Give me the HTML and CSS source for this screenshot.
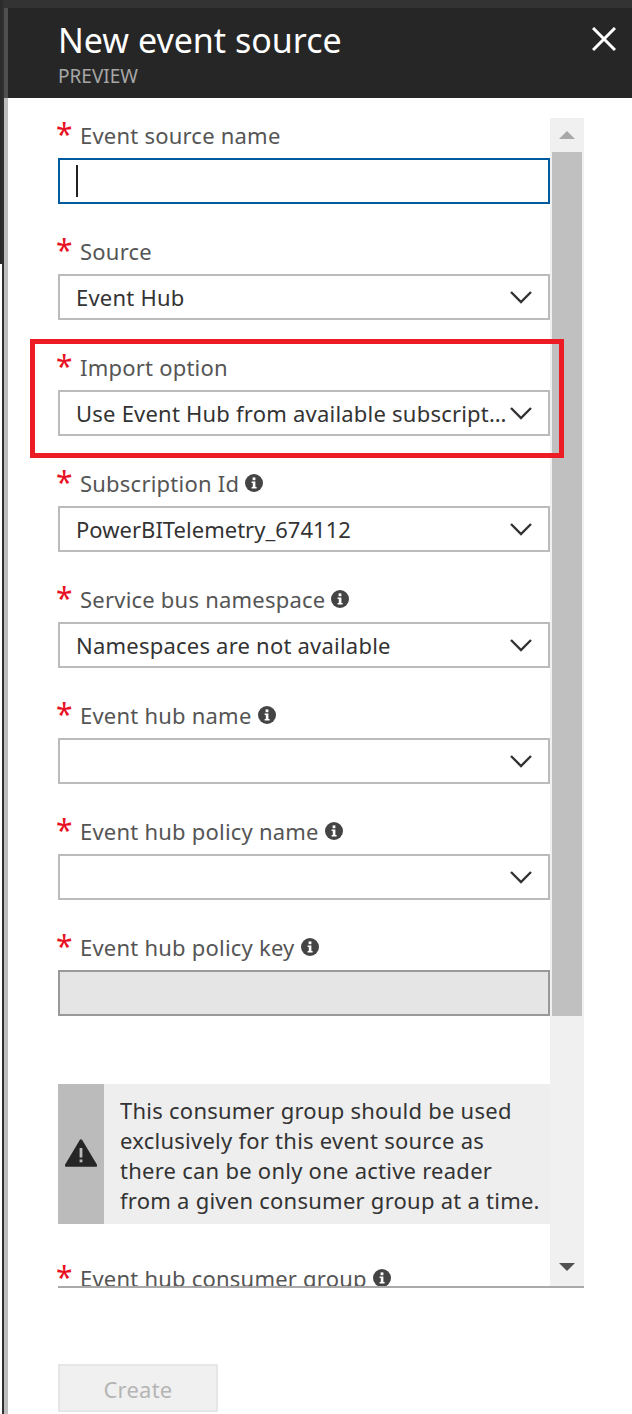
FILE: index.html
```html
<!doctype html>
<html>

<head>
    <meta charset="UTF-8">
    <title>New event source</title>
    <link rel="stylesheet" href="styles.css">
</head>

<body>
    <div class="page">
        <div class="edge-outer"><i></i><i></i></div>
        <div class="edge-blade"></div>

        <div class="blade">
            <div class="top-band"></div>

            <div class="header">
                <div>
                    <h1>New event source</h1>
                    <div class="subtitle">PREVIEW</div>
                </div>
                <svg class="close" width="24" height="24" viewBox="0 0 24 24">
                    <path d="M1 1L23 23M23 1L1 23" stroke="#fff" stroke-width="3" fill="none" />
                </svg>
            </div>

            <div class="body">
                <div class="form-wrap">
                    <div class="form">
                        <div class="fields">
                            <div class="field">
                                <div class="label"><span class="star">*</span>Event source name</div>
                                <div class="input focused"><span class="caret"></span></div>
                            </div>
                            <div class="field">
                                <div class="label"><span class="star">*</span>Source</div>
                                <div class="input">
                                    <span class="value">Event Hub</span>
                                    <svg class="chevron" width="24" height="14" viewBox="0 0 24 14"><path d="M2 2L12 12L22 2" /></svg>
                                </div>
                            </div>
                            <div class="field">
                                <div class="label"><span class="star">*</span>Import option</div>
                                <div class="input">
                                    <span class="value">Use Event Hub from available subscriptions</span>
                                    <svg class="chevron" width="24" height="14" viewBox="0 0 24 14"><path d="M2 2L12 12L22 2" /></svg>
                                </div>
                            </div>
                            <div class="field">
                                <div class="label"><span class="star">*</span>Subscription Id
                                    <svg class="info" width="18" height="18" viewBox="0 0 18 18"><circle cx="9" cy="9" r="9" /><rect x="7.6" y="3.4" width="2.8" height="2.8" /><path d="M6.6 7.4H10.4V13H11.6V14.6H6.6V13H7.8V9H6.6Z" /></svg>
                                </div>
                                <div class="input">
                                    <span class="value narrow">PowerBITelemetry_674112</span>
                                    <svg class="chevron" width="24" height="14" viewBox="0 0 24 14"><path d="M2 2L12 12L22 2" /></svg>
                                </div>
                            </div>
                            <div class="field">
                                <div class="label"><span class="star">*</span>Service bus namespace
                                    <svg class="info" width="18" height="18" viewBox="0 0 18 18"><circle cx="9" cy="9" r="9" /><rect x="7.6" y="3.4" width="2.8" height="2.8" /><path d="M6.6 7.4H10.4V13H11.6V14.6H6.6V13H7.8V9H6.6Z" /></svg>
                                </div>
                                <div class="input">
                                    <span class="value">Namespaces are not available</span>
                                    <svg class="chevron" width="24" height="14" viewBox="0 0 24 14"><path d="M2 2L12 12L22 2" /></svg>
                                </div>
                            </div>
                            <div class="field">
                                <div class="label"><span class="star">*</span>Event hub name
                                    <svg class="info" width="18" height="18" viewBox="0 0 18 18"><circle cx="9" cy="9" r="9" /><rect x="7.6" y="3.4" width="2.8" height="2.8" /><path d="M6.6 7.4H10.4V13H11.6V14.6H6.6V13H7.8V9H6.6Z" /></svg>
                                </div>
                                <div class="input">
                                    <span class="value"></span>
                                    <svg class="chevron" width="24" height="14" viewBox="0 0 24 14"><path d="M2 2L12 12L22 2" /></svg>
                                </div>
                            </div>
                            <div class="field">
                                <div class="label"><span class="star">*</span>Event hub policy name
                                    <svg class="info" width="18" height="18" viewBox="0 0 18 18"><circle cx="9" cy="9" r="9" /><rect x="7.6" y="3.4" width="2.8" height="2.8" /><path d="M6.6 7.4H10.4V13H11.6V14.6H6.6V13H7.8V9H6.6Z" /></svg>
                                </div>
                                <div class="input">
                                    <span class="value"></span>
                                    <svg class="chevron" width="24" height="14" viewBox="0 0 24 14"><path d="M2 2L12 12L22 2" /></svg>
                                </div>
                            </div>
                            <div class="field">
                                <div class="label"><span class="star">*</span>Event hub policy key
                                    <svg class="info" width="18" height="18" viewBox="0 0 18 18"><circle cx="9" cy="9" r="9" /><rect x="7.6" y="3.4" width="2.8" height="2.8" /><path d="M6.6 7.4H10.4V13H11.6V14.6H6.6V13H7.8V9H6.6Z" /></svg>
                                </div>
                                <div class="input disabled"></div>
                            </div>

                            <div class="warning">
                                <div class="warning-icon">
                                    <svg width="32" height="28" viewBox="0 0 32 28">
                                        <path d="M16 1.5L31 26.5H1Z" fill="#262626" stroke="#262626" stroke-width="2.5" stroke-linejoin="round" />
                                        <rect x="14.6" y="9" width="2.8" height="9.5" fill="#bbb" />
                                        <rect x="14.6" y="20.5" width="2.8" height="2.8" fill="#bbb" />
                                    </svg>
                                </div>
                                <div class="warning-text">This consumer group should be used<br>exclusively for this event source as<br>there can be only one active reader<br>from a given consumer group at a time.</div>
                            </div>

                            <div class="label"><span class="star">*</span>Event hub consumer group
                                <svg class="info" width="18" height="18" viewBox="0 0 18 18"><circle cx="9" cy="9" r="9" /><rect x="7.6" y="3.4" width="2.8" height="2.8" /><path d="M6.6 7.4H10.4V13H11.6V14.6H6.6V13H7.8V9H6.6Z" /></svg>
                            </div>
                        </div>

                        <div class="scrollbar">
                            <div class="arrow up"></div>
                            <div class="thumb"></div>
                            <div class="arrow down"></div>
                        </div>
                    </div>

                    <div class="highlight"></div>
                </div>

                <div class="create">Create</div>
            </div>
        </div>
    </div>
</body>

</html>
```

FILE: styles.css
```css
* {
    margin: 0;
    padding: 0;
    box-sizing: border-box;
}

body {
    background: #fff;
    font-family: "Noto Sans", "Open Sans", sans-serif;
    overflow: hidden;
}

.page {
    display: flex;
    width: 632px;
    height: 1414px;
}

/* thin strips left of the blade */
.edge-outer {
    width: 4px;
    display: flex;
    background: linear-gradient(#2b2b2b 264px, #fff 264px);
}
.edge-outer i {
    width: 2px;
}
.edge-outer i + i {
    background: #2f2f2f;
}
.edge-blade {
    width: 4px;
    background: linear-gradient(#333 8px, #4f4f4f 8px, #4f4f4f 98px, #bdbdbd 98px);
}

.blade {
    flex: 1;
    display: flex;
    flex-direction: column;
}
.top-band {
    height: 8px;
    background: #333;
}
.header {
    height: 90px;
    background: #262626;
    padding: 9px 16px 0 50px;
    display: flex;
    justify-content: space-between;
    align-items: flex-start;
}
.header h1 {
    font-size: 34px;
    font-weight: 400;
    line-height: 46px;
    color: #fff;
}
.subtitle {
    font-size: 19px;
    line-height: 26px;
    color: #a6a6a6;
}
.close {
    margin-top: 10px;
}

.body {
    padding: 20px 0 0 50px;
}
.form-wrap {
    position: relative;
    width: 526px;
}
.form {
    display: flex;
    height: 1170px;
    border-bottom: 2px solid #aaa;
}
/* 2px wider on the left so the stars are not clipped */
.fields {
    width: 494px;
    margin-left: -2px;
    padding-left: 2px;
    overflow: hidden;
}

.field {
    height: 116px;
}
.label {
    height: 40px;
    padding-bottom: 6px;
    display: flex;
    align-items: center;
    font-size: 22px;
    letter-spacing: 0.22px;
    color: #555;
    white-space: nowrap;
}
.star {
    width: 24px;
    margin-left: -2px;
    margin-top: -2px;
    font-size: 30px;
    line-height: 30px;
    color: #e81123;
}
.info {
    margin-left: 6px;
    fill: #444;
}
.info rect,
.info path {
    fill: #fff;
}

.input {
    height: 46px;
    border: 2px solid #bbb;
    display: flex;
    align-items: center;
    padding: 0 16px;
    font-size: 22px;
    letter-spacing: 0.22px;
    color: #333;
}
.input.focused {
    border-color: #005a9e;
}
.input.disabled {
    background: #e5e5e5;
    border-color: #999;
}
.caret {
    width: 2px;
    height: 32px;
    background: #222;
}
.value {
    flex: 1;
    min-width: 0;
    white-space: nowrap;
    overflow: hidden;
    text-overflow: ellipsis;
}
.value.narrow {
    letter-spacing: 0.02px;
}
.chevron {
    flex: none;
    margin-left: 2px;
    margin-right: -1px;
    fill: none;
    stroke: #333;
    stroke-width: 2.4;
}

.warning {
    display: flex;
    height: 140px;
    margin-top: 38px;
    margin-bottom: 37px;
    background: #eee;
}
.warning-icon {
    width: 46px;
    padding-bottom: 3px;
    background: #bbb;
    display: flex;
    align-items: center;
    justify-content: center;
}
.warning-text {
    padding: 11px 0 0 16px;
    font-size: 22px;
    letter-spacing: 0.25px;
    line-height: 30px;
    color: #333;
    white-space: nowrap;
}

.scrollbar {
    width: 34px;
    background: #f0f0f0;
    display: flex;
    flex-direction: column;
    align-items: center;
}
.thumb {
    flex: none;
    width: 30px;
    height: 864px;
    background: #c0c0c0;
}
.arrow {
    flex: none;
    width: 0;
    height: 0;
    border-left: 8px solid transparent;
    border-right: 8px solid transparent;
}
.arrow.up {
    margin: 13px 0 13px;
    border-bottom: 8px solid #a8a8a8;
}
.arrow.down {
    margin-top: 247px;
    border-top: 8px solid #505050;
}

/* red annotation box drawn over the form */
.highlight {
    position: absolute;
    left: -28px;
    top: 221px;
    width: 534px;
    height: 119px;
    border: 5px solid #ed1c24;
}

.create {
    width: 160px;
    height: 48px;
    margin-top: 76px;
    padding-top: 2px;
    background: #f0f0f0;
    border: 2px solid #e6e6e6;
    display: flex;
    align-items: center;
    justify-content: center;
    font-size: 22px;
    letter-spacing: 0.22px;
    color: #b5b5b5;
}
```
